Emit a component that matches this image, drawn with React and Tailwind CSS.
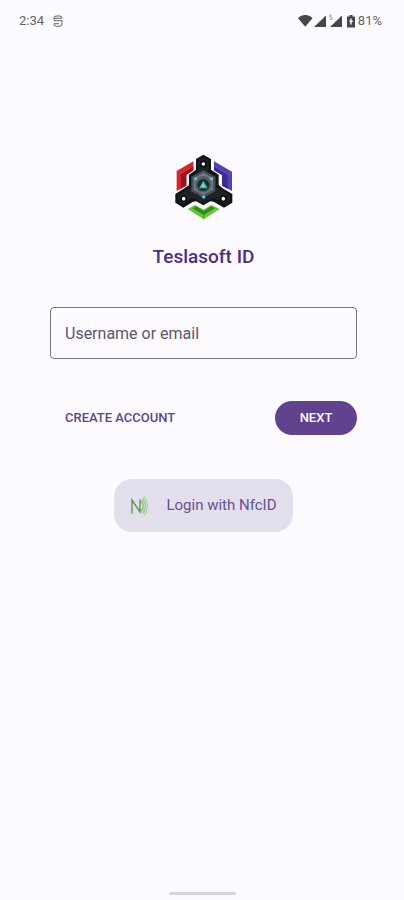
import { useState } from "react";

function StatusBar() {
  return (
    <div className="flex h-[42px] items-center justify-between pl-[19px] pr-[22px] text-[13px] text-[#66646a]">
      <div className="flex items-center gap-2">
        <span>2:34</span>
        <svg className="h-3 w-3" viewBox="0 0 12 12" fill="none" stroke="#858389" strokeWidth="1.2">
          <path d="M2 5.200V3.200C2 1.600 4 .8 6 .8s4 .8 4 2.400M2 3.400h8M2 5.600h8v3c0 1.800-2 2.800-4 2.800s-4-1-4-2.800" />
          <path d="M2 8.600h5" />
        </svg>
      </div>
      <div className="flex items-center">
        <svg className="h-[14px] w-[60px]" viewBox="0 0 60 14" fill="#48464b">
          <path d="M0 4.200C4-.1 10.500-.1 14.500 4.200L7.250 12.800Z" />
          <path d="M28 1.500v11.500H16Z" />
          <path d="M44 1.500v11.500H32Z" />
          <path d="M34 1h-2.200v2.200h2.200v2.200h-2.600" fill="none" stroke="#a5a3a9" strokeWidth="1" />
          <path d="M51.500 1h3v1.400h2.500v11h-8V2.400h2.500Z" />
          <path d="M53 4.500v6M51.300 7.200h3.400" stroke="#fdfbff" strokeWidth="1.400" />
        </svg>
        <span>81%</span>
      </div>
    </div>
  );
}

function Logo() {
  return (
    <svg className="h-[68px] w-[58px]" viewBox="36 24 174 204" role="img" aria-label="Teslasoft">
      <path d="M91 49v27L70 90v32l-29 16V78Z" fill="#d8232a" />
      <path d="M91 63v13L70 90v32l-16 9V86Z" fill="#8c191e" />
      <path d="m41 78 13 8 37-23" fill="none" stroke="#ec3d43" strokeWidth="2" />
      <path d="M153 49v27l24 14v32l30 16V80Z" fill="#5640b9" />
      <path d="M153 63v13l24 14v32l17 9V88Z" fill="#3b2b8c" />
      <path d="m207 80-13 8-41-25" fill="none" stroke="#7462cb" strokeWidth="2" />
      <path d="m74 192 23-12 25 14 23-14 25 12-48 31Z" fill="#62c935" />
      <path d="m88 190 10-6 24 13 23-13 11 6-34 20Z" fill="#338b20" />
      <path d="M122 210v13" stroke="#338b20" strokeWidth="2" />
      <path
        d="m121 29 23 13v32l23 15v31l14 11 27 16v26l-25 15-31-18-10-1-21 12-21-12-10 1-29 18-24-15v-26l25-16 16-11V89l21-15V42Z"
        fill="#111418"
      />
      <path d="m121 40 15 8v32l23 14v31l41 25v18l-16 9-31-18-32 14-32-14-29 18-15-9v-18l41-25V94l20-14V48Z" fill="#1d2227" />
      <path d="m121 76 36 20v43l-36 20-36-20V96Z" fill="#4b5158" />
      <path d="m121 84 29 16v34l-29 16-29-16v-34Z" fill="#757b80" />
      <circle cx="121" cy="118" r="25" fill="#555c62" />
      <circle cx="121" cy="120" r="18" fill="#103039" />
      <path d="m121 107 13 23h-26Z" fill="#4ab5a7" />
      <path d="m121 115 5 10h-10Z" fill="#8ee2d1" />
      <g fill="#56c5eb">
        <circle cx="98" cy="101" r="5" />
        <circle cx="145" cy="101" r="5" />
        <circle cx="122" cy="156" r="5" />
      </g>
      <g fill="#fdfbff" stroke="#080b0e" strokeWidth="5">
        <circle cx="121" cy="57" r="8" />
        <circle cx="62" cy="161" r="8" />
        <circle cx="181" cy="161" r="8" />
      </g>
    </svg>
  );
}

function NfcIcon() {
  return (
    <svg className="h-5 w-5" viewBox="0 0 20 20" fill="none" strokeLinecap="round">
      <path d="M2 17V4l8 12V4" stroke="#5b9655" strokeWidth="1.400" />
      <path d="M11.500 5c2 3 2 7 0 10" stroke="#7dc174" strokeWidth="1.400" />
      <path d="M13 3c3 4.200 3 9.800 0 14" stroke="#8bce80" strokeWidth="1.400" />
      <path d="M14.500 1c4 5.400 4 12.600 0 18" stroke="#a5daa0" strokeWidth="1.400" />
    </svg>
  );
}

export default function App() {
  const [username, setUsername] = useState("");

  return (
    <div className="flex min-h-screen flex-col bg-[#fdfbff] font-[Roboto,sans-serif]">
      <StatusBar />
      <main className="flex flex-1 flex-col items-center pt-[111px] pr-[45px] pl-12">
        <Logo />
        <h1 className="mt-6 text-[19px] leading-6 font-medium text-[#4b2e83]">Teslasoft ID</h1>
        <form className="mt-[38px] w-full px-0.5" onSubmit={e => e.preventDefault()}>
          <input
            type="text"
            aria-label="Username or email"
            placeholder="Username or email"
            value={username}
            onChange={e => setUsername(e.target.value)}
            className="block h-[52px] w-full rounded border border-[#77757d] bg-transparent px-3.5 text-base text-[#4d4860] outline-none placeholder:text-[#5b566c]"
          />
          <div className="mt-[42px] flex items-center justify-between pl-[15px]">
            <button type="button" className="text-[13px] font-medium text-[#5c4590]">CREATE ACCOUNT</button>
            <button type="submit" className="h-[34px] w-[82px] rounded-full bg-[#61428f] text-[13px] font-medium text-white">
              NEXT
            </button>
          </div>
        </form>
        <button type="button" className="mt-11 flex h-[53px] items-center gap-4 rounded-[18px] bg-[#e3dfec] px-4 text-[15px] text-[#65518f]">
          <NfcIcon />
          Login with NfcID
        </button>
      </main>
      <div className="mx-auto mb-[5px] h-[3px] w-[67px] rounded-full bg-[#d6d4d8]" />
    </div>
  );
}
